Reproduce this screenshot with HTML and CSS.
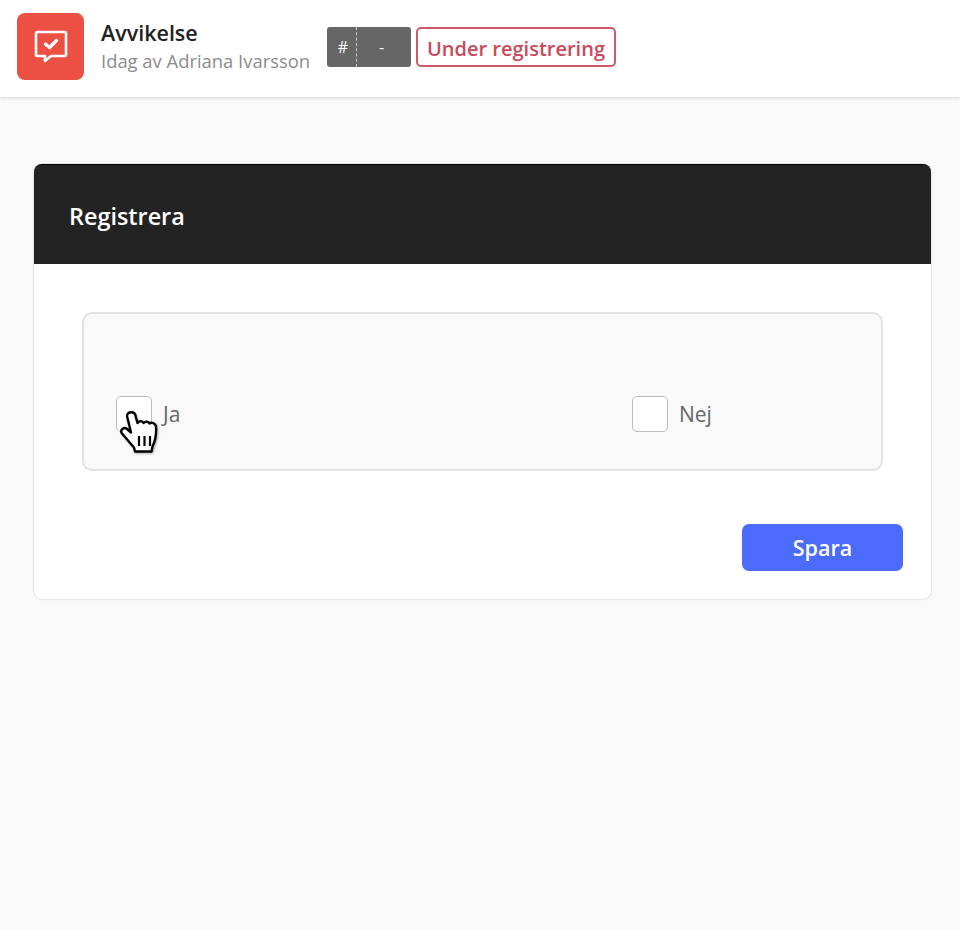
FILE: index.html
```html
<!DOCTYPE html>
<html lang="en">
<head>
    <meta charset="UTF-8">
    <meta name="viewport" content="width=device-width, initial-scale=1.0">
    <title>Avvikelse</title>
    <link rel="stylesheet" href="styles.css">
</head>
<body>
    <header class="topbar">
        <div class="app-icon">
            <svg width="36" height="36" viewBox="0 0 36 36" fill="none">
                <path d="M4.5 3h27a1.500 1.500 0 0 1 1.500 1.500v21a1.500 1.500 0 0 1-1.500 1.500H18l-6 5v-5H4.500A1.500 1.500 0 0 1 3 25.500v-21A1.500 1.500 0 0 1 4.500 3z" stroke="#fff" stroke-width="2.600" stroke-linejoin="round"/>
                <path d="M12.500 15l4 3.500 7-7" stroke="#fff" stroke-width="3.200" stroke-linecap="round" stroke-linejoin="round"/>
            </svg>
        </div>
        <div class="title-block">
            <div class="title">Avvikelse</div>
            <div class="subtitle">Idag av Adriana Ivarsson</div>
        </div>
        <div class="ticket">
            <span class="ticket-hash">#</span>
            <span class="ticket-number">-</span>
        </div>
        <div class="status">Under registrering</div>
    </header>

    <main class="content">
        <section class="card">
            <div class="card-head">Registrera</div>
            <div class="card-body">
                <div class="choice-box">
                    <label class="choice">
                        <span class="check"></span>
                        <span>Ja</span>
                        <svg class="cursor" width="44" height="48" viewBox="0 0 44 48">
                            <path d="M8 7c0-5 8-5 8.500 0l2 7c2-2.500 5-2 6 0 2-2 5-1.500 6 .5 2-1.500 6-.5 6.500 3 .5 7-.5 14-3.500 20l-1 5H16l-1-4L3 24.500c-2.500-3.500 2-7 5-4.500l4 3.500z" fill="#fff" stroke="#000" stroke-width="2.400" stroke-linejoin="round"/>
                            <path d="M20 27v10M25.500 27v10M31 27v10" stroke="#000" stroke-width="2.200"/>
                        </svg>
                    </label>
                    <label class="choice">
                        <span class="check"></span>
                        <span>Nej</span>
                    </label>
                </div>
                <div class="actions">
                    <button class="save">Spara</button>
                </div>
            </div>
        </section>
    </main>
</body>
</html>
```

FILE: styles.css
```css
body {
    font-family: "Open Sans", sans-serif;
    background-color: #f9f9f9;
    margin: 0;
    height: 930px;
    overflow: hidden;
}

.topbar {
    background-color: #fff;
    height: 93px;
    padding: 0 0 4px 17px;
    display: flex;
    align-items: center;
    box-shadow: 0px 1px 3px rgba(0, 0, 0, 0.15);
}

.app-icon {
    width: 67px;
    height: 67px;
    background-color: #ec5042;
    border-radius: 8px;
    display: flex;
    align-items: center;
    justify-content: center;
}

.title-block {
    margin-left: 17px;
    width: 226px;
}

.title {
    font-size: 21.500px;
    font-weight: 600;
    line-height: 28px;
    color: #222;
}

.subtitle {
    font-size: 18.400px;
    line-height: 28px;
    color: #8c8c8c;
}

.ticket {
    width: 84px;
    height: 40px;
    background-color: #666;
    border-radius: 3px;
    color: #fff;
    font-size: 16px;
    display: flex;
    align-items: center;
}

.ticket-hash {
    width: 30px;
    height: 40px;
    line-height: 40px;
    padding-left: 3px;
    box-sizing: border-box;
    text-align: center;
    border-right: 1px dashed #ccc;
}

.ticket-number {
    flex: 1;
    padding-right: 5px;
    text-align: center;
}

.status {
    margin-left: 5px;
    height: 36px;
    line-height: 40px;
    padding: 0 9px;
    border: 2px solid #cf5a68;
    border-radius: 5px;
    color: #c94a5a;
    font-size: 20px;
    font-weight: 600;
}

.content {
    padding: 67px 29px 0 34px;
}

.card {
    background-color: #fff;
    border-radius: 8px;
    box-shadow: 0px 0px 2px rgba(0, 0, 0, 0.25);
}

.card-head {
    background-color: #232323;
    border-top: 1px solid #000;
    color: #fff;
    height: 100px;
    box-sizing: border-box;
    line-height: 102px;
    padding-left: 35px;
    font-size: 23.400px;
    font-weight: 600;
    border-radius: 8px 8px 0 0;
}

.card-body {
    padding: 48px 28px 28px 48px;
}

.choice-box {
    width: 801px;
    height: 159px;
    box-sizing: border-box;
    background-color: #f9f9f9;
    border: 2px solid #e2e2e2;
    border-radius: 10px;
    padding: 82px 0 0 32px;
    display: grid;
    grid-template-columns: 516px 1fr;
    align-items: start;
}

.choice {
    position: relative;
    display: flex;
    align-items: center;
    gap: 11px;
    font-size: 21px;
    line-height: 36px;
    color: #666;
}

.check {
    width: 36px;
    height: 36px;
    box-sizing: border-box;
    background-color: #fff;
    border: 1.500px solid #bbb;
    border-radius: 5px;
}

.cursor {
    position: absolute;
    left: 3px;
    top: 13px;
    filter: drop-shadow(1px 1px 1px rgba(0, 0, 0, 0.3));
}

.actions {
    display: flex;
    justify-content: flex-end;
    margin-top: 53px;
}

.save {
    width: 161px;
    height: 47px;
    background-color: #4a6bfb;
    color: #fff;
    border: none;
    border-radius: 7px;
    font-family: "Open Sans", sans-serif;
    font-size: 21.500px;
    font-weight: 600;
}
```
